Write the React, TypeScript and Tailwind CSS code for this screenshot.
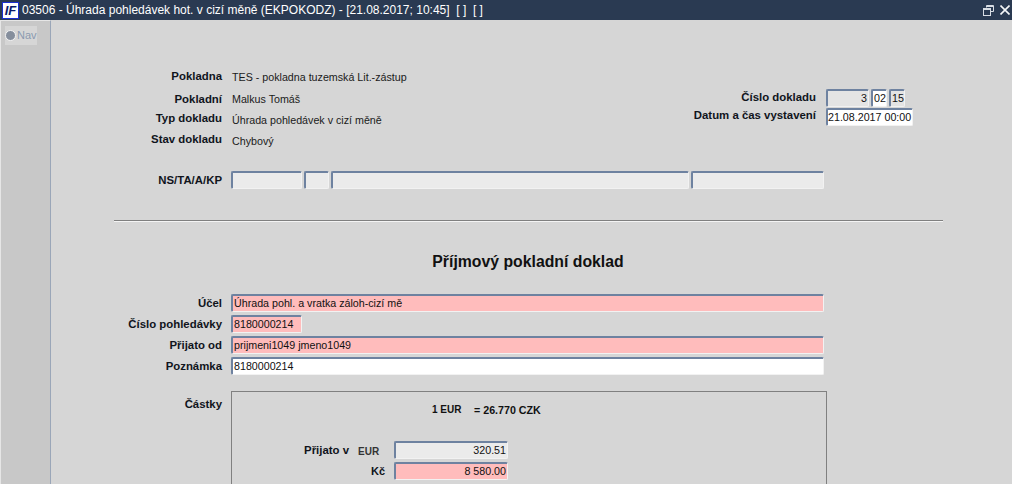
const labelCls = "w-[171px] shrink-0 text-right text-[11.4px] font-bold text-[#10141c] whitespace-nowrap";
const edge = "h-[18px] shrink-0 rounded-[2px] border-t-2 border-l-2 border-r border-b border-t-[#6e82a0] border-l-[#6e82a0] border-r-[#f2f2f2] border-b-[#f2f2f2] text-[10.7px] leading-[15px] text-[#111] overflow-hidden whitespace-nowrap";

function Field({ w, bg = "bg-[#ebebeb]", right, tight, children }: { w: string; bg?: string; right?: boolean; tight?: boolean; children?: string }) {
  return <div className={`${edge} ${w} ${bg} ${right ? "text-right pr-[1px]" : tight ? "" : "pl-[1px]"}`}>{children}</div>;
}

function InfoRow({ label, value, h, nudge = "" }: { label: string; value: string; h: string; nudge?: string }) {
  return (
    <div className={`flex items-center gap-[10px] ${h}`}>
      <div className={`${labelCls} ${nudge}`}>{label}</div>
      <div className="text-[10.7px] text-[#1a1a1a] whitespace-nowrap pt-[1px]">{value}</div>
    </div>
  );
}

function FormRow({ label, children }: { label: string; children: React.ReactNode }) {
  return (
    <div className="flex items-center gap-[9px] mb-[3px]">
      <div className={labelCls}>{label}</div>
      {children}
    </div>
  );
}

export default function App() {
  return (
    <div className="w-[1012px] h-[484px] overflow-hidden flex flex-col bg-[#d6d6d6] font-['Liberation_Sans',Arial,sans-serif]">
      <div className="h-[20px] shrink-0 bg-[#2a3a52] flex items-center text-white">
        <div className="ml-[2px] w-[17px] h-[17px] bg-white border-[1.5px] border-[#1a2fd0] flex items-center justify-center text-[13px] leading-none font-bold italic text-[#0a1a6a]">IF</div>
        <div className="ml-[3px] text-[12px] whitespace-nowrap">03506 - Úhrada pohledávek hot. v cizí měně (EKPOKODZ) - [21.08.2017; 10:45]&nbsp; [ ]&nbsp; [ ]</div>
        <div className="ml-auto mr-[2px] flex items-center gap-[6px]">
          <svg width="11" height="11" viewBox="0 0 11 11" fill="none" stroke="#d8dde4" strokeWidth="1">
            <path d="M3.5 2.5V.5h7v6H8" />
            <path d="M3.5 1.5h7" />
            <rect x=".5" y="3.5" width="7" height="7" />
            <path d="M.5 4.5h7" />
          </svg>
          <svg width="10" height="10" viewBox="0 0 10 10" fill="none" stroke="#f4f6f8" strokeWidth="1.6">
            <path d="M.5.5l9 9M9.5.5l-9 9" />
          </svg>
        </div>
      </div>

      <div className="flex-1 flex min-h-0">
        <div className="w-[51px] shrink-0 bg-[#c8c8c8] border-r border-r-[#9aa6b8] border-l border-l-[#e6e6e6] border-t border-t-[#e6e6e6] pl-[4px] pt-[5px]">
          <div className="w-[32px] h-[19px] bg-[#d6d6d6] flex items-center gap-[1px]">
            <div className="w-[11px] h-[11px] rounded-full bg-[#858e9c] border border-[#f4f4f4] shrink-0" />
            <span className="text-[11px] text-[#8a9ab0]">Nav</span>
          </div>
        </div>

        <div className="flex-1 min-w-0 pt-[46px]">
          <div className="flex h-[99px]">
            <div className="w-[640px]">
              <InfoRow label="Pokladna" value="TES - pokladna tuzemská Lit.-zástup" h="h-[22px]" />
              <InfoRow label="Pokladní" value="Malkus Tomáš" h="h-[22px]" nudge="pt-[2px]" />
              <InfoRow label="Typ dokladu" value="Úhrada pohledávek v cizí měně" h="h-[20px]" nudge="pb-[2px]" />
              <InfoRow label="Stav dokladu" value="Chybový" h="h-[21px]" nudge="pb-[2px]" />
            </div>
            <div className="pt-[22px]">
              <div className="flex items-center h-[20px]">
                <div className="w-[125px] text-right text-[11.4px] font-bold text-[#10141c] whitespace-nowrap">Číslo dokladu</div>
                <div className="ml-[10px] flex gap-[2px]">
                  <Field w="w-[43px]" bg="bg-[#e4e4e4]" right>3</Field>
                  <Field w="w-[16px]" bg="bg-white">02</Field>
                  <Field w="w-[16px]" bg="bg-[#e4e4e4]">15</Field>
                </div>
              </div>
              <div className="flex items-center h-[17px]">
                <div className="w-[125px] pb-[2px] text-right text-[11.4px] font-bold text-[#10141c] whitespace-nowrap">Datum a čas vystavení</div>
                <div className="ml-[10px]">
                  <Field w="w-[87px]" bg="bg-white" tight>21.08.2017 00:00</Field>
                </div>
              </div>
            </div>
          </div>

          <div className="flex items-center gap-[9px] mt-[6px]">
            <div className={`${labelCls} pt-[1px]`}>NS/TA/A/KP</div>
            <div className="flex gap-[2px]">
              <Field w="w-[71px]" />
              <Field w="w-[25px]" />
              <Field w="w-[358px]" />
              <Field w="w-[133px]" />
            </div>
          </div>

          <div className="ml-[63px] w-[829px] mt-[31px] border-t border-t-[#808080] border-b border-b-[#f4f4f4]" />

          <h1 className="w-[954px] mt-[31px] text-center text-[15.8px] leading-[18px] font-bold text-[#111]">Příjmový pokladní doklad</h1>

          <div className="mt-[23px]">
            <FormRow label="Účel"><Field w="w-[593px]" bg="bg-[#ffbcbc]">Úhrada pohl. a vratka záloh-cizí mě</Field></FormRow>
            <FormRow label="Číslo pohledávky"><Field w="w-[71px]" bg="bg-[#ffbcbc]">8180000214</Field></FormRow>
            <FormRow label="Přijato od"><Field w="w-[593px]" bg="bg-[#ffbcbc]">prijmeni1049 jmeno1049</Field></FormRow>
            <FormRow label="Poznámka"><Field w="w-[593px]" bg="bg-white">8180000214</Field></FormRow>
          </div>

          <div className="flex gap-[9px] mt-[16px]">
            <div className={`${labelCls} pt-[5px]`}>Částky</div>
            <div className="w-[596px] h-[120px] border border-[#808080]">
              <div className="flex h-[35px] items-center text-[10.7px] font-bold text-[#111]">
                <span className="ml-[200px] w-[42px] text-[10px]">1 EUR</span>
                <span>= 26.770 CZK</span>
              </div>
              <div className="mt-[14px] flex flex-col gap-[3px]">
                <div className="flex items-center">
                  <div className="w-[117px] text-right text-[11.4px] font-bold text-[#10141c]">Přijato v</div>
                  <div className="ml-[9px] w-[36px] text-[10px] font-bold text-[#333] pt-[3px]">EUR</div>
                  <Field w="w-[114px]" right>320.51</Field>
                </div>
                <div className="flex items-center">
                  <div className="w-[153px] text-right text-[11px] font-bold text-[#10141c]">Kč</div>
                  <div className="w-[9px]" />
                  <Field w="w-[114px]" bg="bg-[#ffbcbc]" right>8 580.00</Field>
                </div>
              </div>
            </div>
          </div>
        </div>
      </div>
    </div>
  );
}
